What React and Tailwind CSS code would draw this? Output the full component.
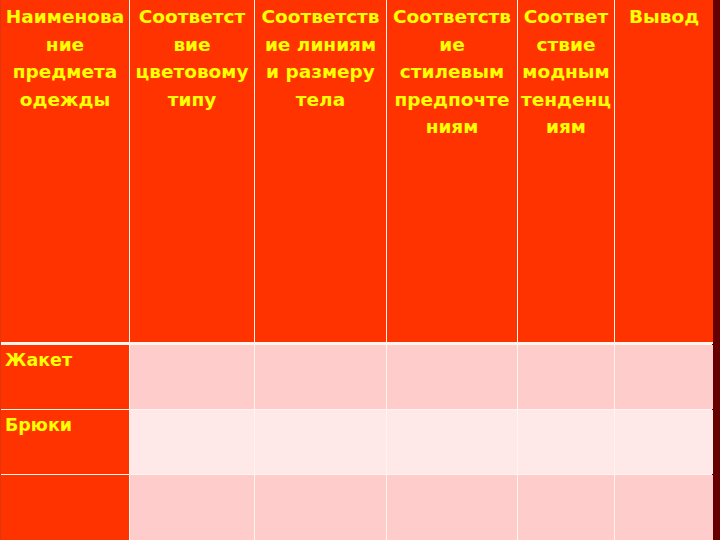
export default function App() {
  const headers = [
    ["Наименова", "ние", "предмета", "одежды"],
    ["Соответст", "вие", "цветовому", "типу"],
    ["Соответств", "ие линиям", "и размеру", "тела"],
    ["Соответств", "ие", "стилевым", "предпочте", "ниям"],
    ["Соответ", "ствие", "модным", "тенденц", "иям"],
    ["Вывод"],
  ];
  const rows = [
    { label: "Жакет", bg: "bg-[#ffcccc]" },
    { label: "Брюки", bg: "bg-[#ffe8e8]" },
    { label: "", bg: "bg-[#ffcccc]" },
  ];
  return (
    <div
      className="w-[720px] h-[540px] overflow-hidden flex bg-[#660000]"
      style={{ fontFamily: '"DejaVu Sans", Verdana, sans-serif' }}
    >
      <div className="w-[712px] h-[540px] grid grid-cols-[128px_124px_131px_130px_96px_98px] grid-rows-[344px_64px_64px_66px] gap-px bg-[#fff4ee] border-l border-[#e03510]">
        {headers.map((lines, i) => (
          <div
            key={i}
            className="bg-[#ff3300] border-b-2 border-[#fff4ee] pt-[3px] text-center text-[#ffff00] font-bold text-[18.5px] leading-[27.5px] overflow-visible"
          >
            {lines.map((l, j) => (
              <div key={j} className="whitespace-nowrap">
                {l}
              </div>
            ))}
          </div>
        ))}
        {rows.map((r, ri) => (
          <>
            <div
              key={"l" + ri}
              className="bg-[#ff3300] pl-1 pt-px text-[#ffff00] font-bold text-[17.5px] leading-[28px]"
            >
              {r.label}
            </div>
            {[0, 1, 2, 3, 4].map((c) => (
              <div key={ri + "-" + c} className={r.bg}></div>
            ))}
          </>
        ))}
      </div>
    </div>
  );
}
